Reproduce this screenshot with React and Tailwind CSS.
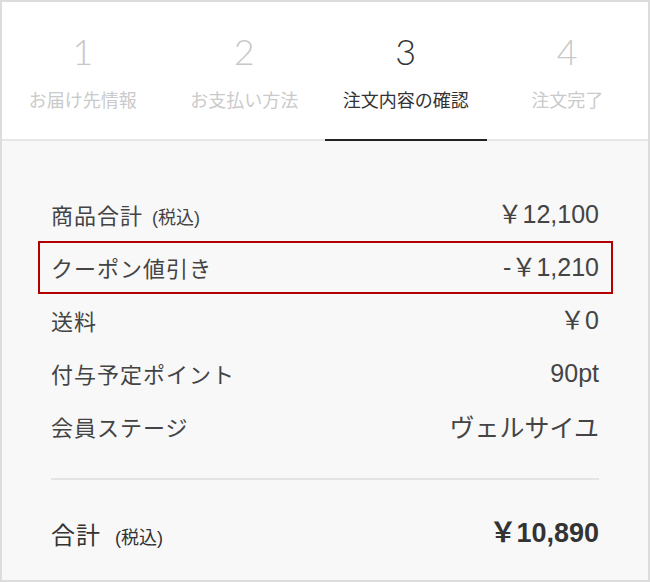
import React from 'react';

const steps = [
    { num: '1', label: 'お届け先情報' },
    { num: '2', label: 'お支払い方法' },
    { num: '3', label: '注文内容の確認', active: true },
    { num: '4', label: '注文完了' },
];

const rows = [
    { label: '商品合計', tax: true, value: '￥12,100' },
    { label: 'クーポン値引き', value: '-￥1,210', coupon: true },
    { label: '送料', value: '￥0' },
    { label: '付与予定ポイント', value: '90pt' },
    { label: '会員ステージ', value: 'ヴェルサイユ', jp: true },
];

const App = () => {
    return (
        <div
            className="w-[650px] h-[582px] border-2 border-[#dcdcdc] bg-[#f8f8f8] flex flex-col"
            style={{ fontFamily: '"Liberation Sans", "Noto Sans CJK JP", sans-serif' }}
        >
            {/* Steps */}
            <div className="bg-white grid grid-cols-4 border-b-2 border-[#e6e6e6] h-[139px]">
                {steps.map((s) => (
                    <div key={s.num} className="relative flex flex-col items-center pt-[26px]">
                        <span
                            className={`text-[36px] leading-[46px] font-light ${s.active ? 'text-[#333]' : 'text-[#c8c8c8]'}`}
                            style={{ fontFamily: 'Lato, "Noto Sans", sans-serif' }}
                        >
                            {s.num}
                        </span>
                        <span
                            className={`mt-[14px] text-[18px] leading-[22px] ${s.active ? 'text-[#333]' : 'text-[#cacaca]'}`}
                            style={{ fontFamily: '"Noto Sans CJK JP", sans-serif' }}
                        >
                            {s.label}
                        </span>
                        {s.active && <div className="absolute left-0 right-0 -bottom-[2px] h-[2px] bg-[#222]" />}
                    </div>
                ))}
            </div>

            {/* Summary */}
            <div className="px-[49px] pt-[47px]">
                {rows.map((r) => (
                    <div
                        key={r.label}
                        className={`h-[53px] flex items-center justify-between text-[#444] ${r.coupon ? '-ml-[13px] -mr-[14px] pl-[11px] pr-[12px] border-2 border-[#b30000]' : ''}`}
                    >
                        <span className="flex items-baseline">
                            <span className="text-[22px] tracking-[1px]" style={{ fontFamily: '"Noto Sans CJK JP", sans-serif' }}>
                                {r.label}
                            </span>
                            {r.tax && <span className="ml-[9px] text-[18px]">(税込)</span>}
                        </span>
                        <span
                            className="text-[25px]"
                            style={r.jp ? { fontFamily: '"Noto Sans CJK JP", sans-serif' } : undefined}
                        >
                            {r.value}
                        </span>
                    </div>
                ))}

                <div className="mt-[25px] h-[2px] bg-[#e4e4e4]" />

                <div className="mt-[27px] h-[53px] flex items-center justify-between text-[#333]">
                    <span className="flex items-baseline">
                        <span className="text-[24px] tracking-[1px]" style={{ fontFamily: '"Noto Sans CJK JP", sans-serif' }}>
                            合計
                        </span>
                        <span className="ml-[14px] text-[18px]">(税込)</span>
                    </span>
                    <span className="text-[27px] font-bold">￥10,890</span>
                </div>
            </div>
        </div>
    );
};

export default App;
